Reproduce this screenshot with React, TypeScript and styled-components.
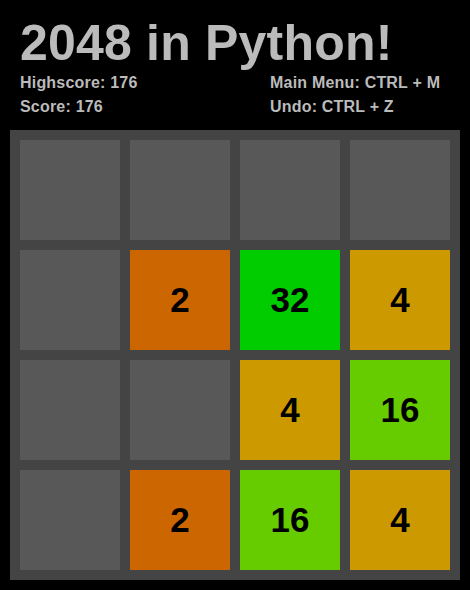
import styled, { createGlobalStyle } from 'styled-components';

const GlobalStyle = createGlobalStyle`
  html, body {
    margin: 0;
    padding: 0;
    background: #000;
  }
  body {
    font-family: 'Liberation Sans', Arial, sans-serif;
  }
`;

const Page = styled.div`
  width: 470px;
  height: 590px;
  padding: 15px 10px 10px;
  box-sizing: border-box;
  display: flex;
  flex-direction: column;
  background: #000;
`;

const Title = styled.h1`
  margin: 0 0 0 10px;
  font-size: 50px;
  line-height: 56px;
  font-weight: 700;
  letter-spacing: 0.2px;
  color: #bbbbbb;
`;

const Info = styled.div`
  display: grid;
  grid-template-columns: 250px 1fr;
  padding-left: 10px;
  margin-bottom: 11px;
`;

const InfoLine = styled.div`
  font-size: 16px;
  line-height: 24px;
  font-weight: 700;
  letter-spacing: 0.2px;
  color: #bbbbbb;
  white-space: nowrap;
`;

const Board = styled.div`
  width: 450px;
  height: 450px;
  box-sizing: border-box;
  padding: 10px;
  background: #444444;
  display: grid;
  grid-template-columns: repeat(4, 100px);
  grid-template-rows: repeat(4, 100px);
  gap: 10px;
`;

const colours: Record<number, string> = {
  0: '#585858',
  2: '#cc6600',
  4: '#cc9900',
  16: '#66cc00',
  32: '#00cc00',
};

const Tile = styled.div<{ $value: number }>`
  background: ${(p) => colours[p.$value] ?? '#585858'};
  display: flex;
  align-items: center;
  justify-content: center;
  font-size: 35px;
  font-weight: 700;
  color: #000;
`;

const grid = [
  [0, 0, 0, 0],
  [0, 2, 32, 4],
  [0, 0, 4, 16],
  [0, 2, 16, 4],
];

const App = () => {
  return (
    <>
      <GlobalStyle />
      <Page>
        <Title>2048 in Python!</Title>
        <Info>
          <InfoLine>Highscore: 176</InfoLine>
          <InfoLine>Main Menu: CTRL + M</InfoLine>
          <InfoLine>Score: 176</InfoLine>
          <InfoLine>Undo: CTRL + Z</InfoLine>
        </Info>
        <Board>
          {grid.flat().map((v, i) => (
            <Tile key={i} $value={v}>
              {v > 0 ? v : ''}
            </Tile>
          ))}
        </Board>
      </Page>
    </>
  );
};

export default App;
